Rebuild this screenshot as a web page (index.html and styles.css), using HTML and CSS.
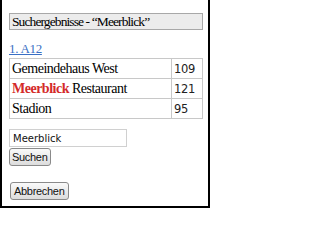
FILE: index.html
```html
<!DOCTYPE html>
<html>
<head>
<meta charset="utf-8">
<link rel="stylesheet" href="styles.css">
</head>
<body>
<div class="frame">
  <div class="title">Suchergebnisse - “Meerblick”</div>
  <a class="page-link" href="#">1. A12</a>
  <table class="results">
    <tr><td class="name">Gemeindehaus West</td><td class="num">109</td></tr>
    <tr><td class="name"><b class="hit">Meerblick</b> Restaurant</td><td class="num">121</td></tr>
    <tr><td class="name">Stadion</td><td class="num">95</td></tr>
  </table>
  <form class="search">
    <input class="field" type="text" value="Meerblick">
    <button class="btn" type="button">Suchen</button>
  </form>
  <button class="btn cancel" type="button">Abbrechen</button>
</div>
</body>
</html>
```
FILE: styles.css
```css
html, body {
  margin: 0;
  padding: 0;
  background: #fff;
}
.frame {
  box-sizing: border-box;
  width: 210px;
  height: 208px;
  border-left: 2px solid #000;
  border-right: 2px solid #000;
  border-bottom: 2px solid #000;
  padding: 13px 5px 0 7px;
  font-family: "Liberation Serif", "Times New Roman", serif;
  color: #000;
}
.title {
  font-family: "Liberation Serif", "Times New Roman", serif;
  background: #ececec;
  border: 1px solid #a8a8a8;
  font-size: 13.5px;
  letter-spacing: -0.9px;
  line-height: 15px;
  padding: 0 2px;
  height: 15px;
}
.page-link {
  display: inline-block;
  margin-top: 11px;
  font-size: 13px;
  line-height: 15px;
  letter-spacing: -0.3px;
  color: #3a6fc4;
  text-decoration: underline;
}
.results {
  margin-top: 1px;
  width: 100%;
  border-collapse: collapse;
  font-size: 14px;
}
.results td {
  border: 1px solid #c8c8c8;
  padding: 1px 2px;
  line-height: 16px;
  height: 17px;
}
.results .name {
  letter-spacing: -0.5px;
}
.results .num {
  width: 26px;
  font-family: "DejaVu Sans", sans-serif;
  font-size: 11.5px;
  letter-spacing: -0.3px;
  color: #222;
}
.hit {
  color: #d42a2a;
}
.search {
  margin: 10px 0 0 0;
  display: flex;
  flex-direction: column;
  align-items: flex-start;
  gap: 1px;
}
.field {
  box-sizing: border-box;
  width: 118px;
  height: 18px;
  border: 1px solid #d0d0d0;
  padding: 0 3px;
  font-family: "DejaVu Sans", sans-serif;
  font-size: 10px;
  color: #111;
}
.btn {
  height: 18px;
  padding: 0 2px;
  border: 1px solid #8a8a8a;
  border-radius: 3px;
  background: linear-gradient(#fafafa, #dcdcdc);
  font-family: "Liberation Sans", Arial, sans-serif;
  font-size: 11px;
  letter-spacing: -0.3px;
  color: #111;
}
.cancel {
  margin-top: 16px;
  margin-left: 1px;
  padding: 0 3px;
}
```
